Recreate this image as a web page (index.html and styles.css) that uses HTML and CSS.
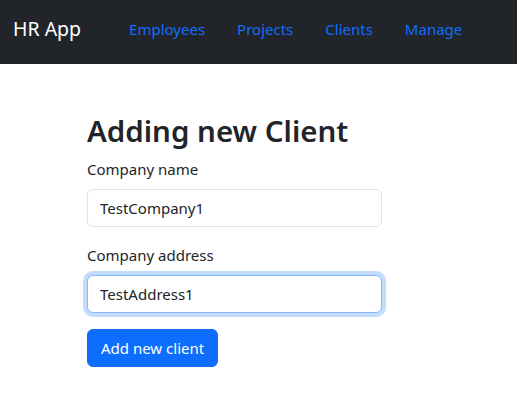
FILE: index.html
```html
<!DOCTYPE html>
<html lang="en">
<head>
<meta charset="utf-8">
<title>HR App</title>
<link rel="stylesheet" href="styles.css">
</head>
<body>
<nav class="navbar">
  <a class="brand" href="#">HR App</a>
  <ul class="nav">
    <li><a class="nav-link" href="#">Employees</a></li>
    <li><a class="nav-link" href="#">Projects</a></li>
    <li><a class="nav-link" href="#">Clients</a></li>
    <li><a class="nav-link" href="#">Manage</a></li>
  </ul>
</nav>
<main class="content">
  <h1 class="title">Adding new Client</h1>
  <form class="form">
    <div class="field">
      <label class="label" for="name">Company name</label>
      <input class="input" id="name" type="text" value="TestCompany1">
    </div>
    <div class="field">
      <label class="label" for="addr">Company address</label>
      <input class="input focused" id="addr" type="text" value="TestAddress1">
    </div>
    <button class="btn" type="button">Add new client</button>
  </form>
</main>
</body>
</html>
```
FILE: styles.css
```css
* { box-sizing: border-box; }
html, body { margin: 0; padding: 0; }
body {
  font-family: "Noto Sans", "Open Sans", sans-serif;
  font-size: 15px;
  line-height: 24px;
  color: #212529;
  background: #fff;
}
.navbar {
  height: 64px;
  background: #212529;
  display: flex;
  align-items: center;
  padding: 0 12px 6px 13px;
}
.brand {
  color: #fff;
  text-decoration: none;
  font-size: 19.5px;
  line-height: 30px;
  margin-right: 16px;
}
.nav {
  list-style: none;
  margin: 0;
  padding: 0 0 0 16px;
  display: flex;
}
.nav-link {
  display: block;
  padding: 8px 16px;
  color: #0d6efd;
  text-decoration: none;
}
.content {
  padding: 49px 0 0 87px;
}
.title {
  margin: 0 0 8px;
  font-size: 29.5px;
  font-weight: 600;
  line-height: 36px;
}
.field { margin-bottom: 16px; }
.label {
  display: block;
  margin-bottom: 8px;
}
.input {
  display: block;
  width: 295px;
  height: 38px;
  padding: 6px 12px;
  font: inherit;
  color: #212529;
  border: 1px solid #dee2e6;
  border-radius: 6px;
  outline: none;
}
.input.focused {
  border-color: #86b7fe;
  box-shadow: 0 0 0 4px rgba(13,110,253,.25);
}
.btn {
  height: 38px;
  padding: 6px 13px;
  font: inherit;
  color: #fff;
  background: #0d6efd;
  border: 1px solid #0d6efd;
  border-radius: 6px;
}
```
